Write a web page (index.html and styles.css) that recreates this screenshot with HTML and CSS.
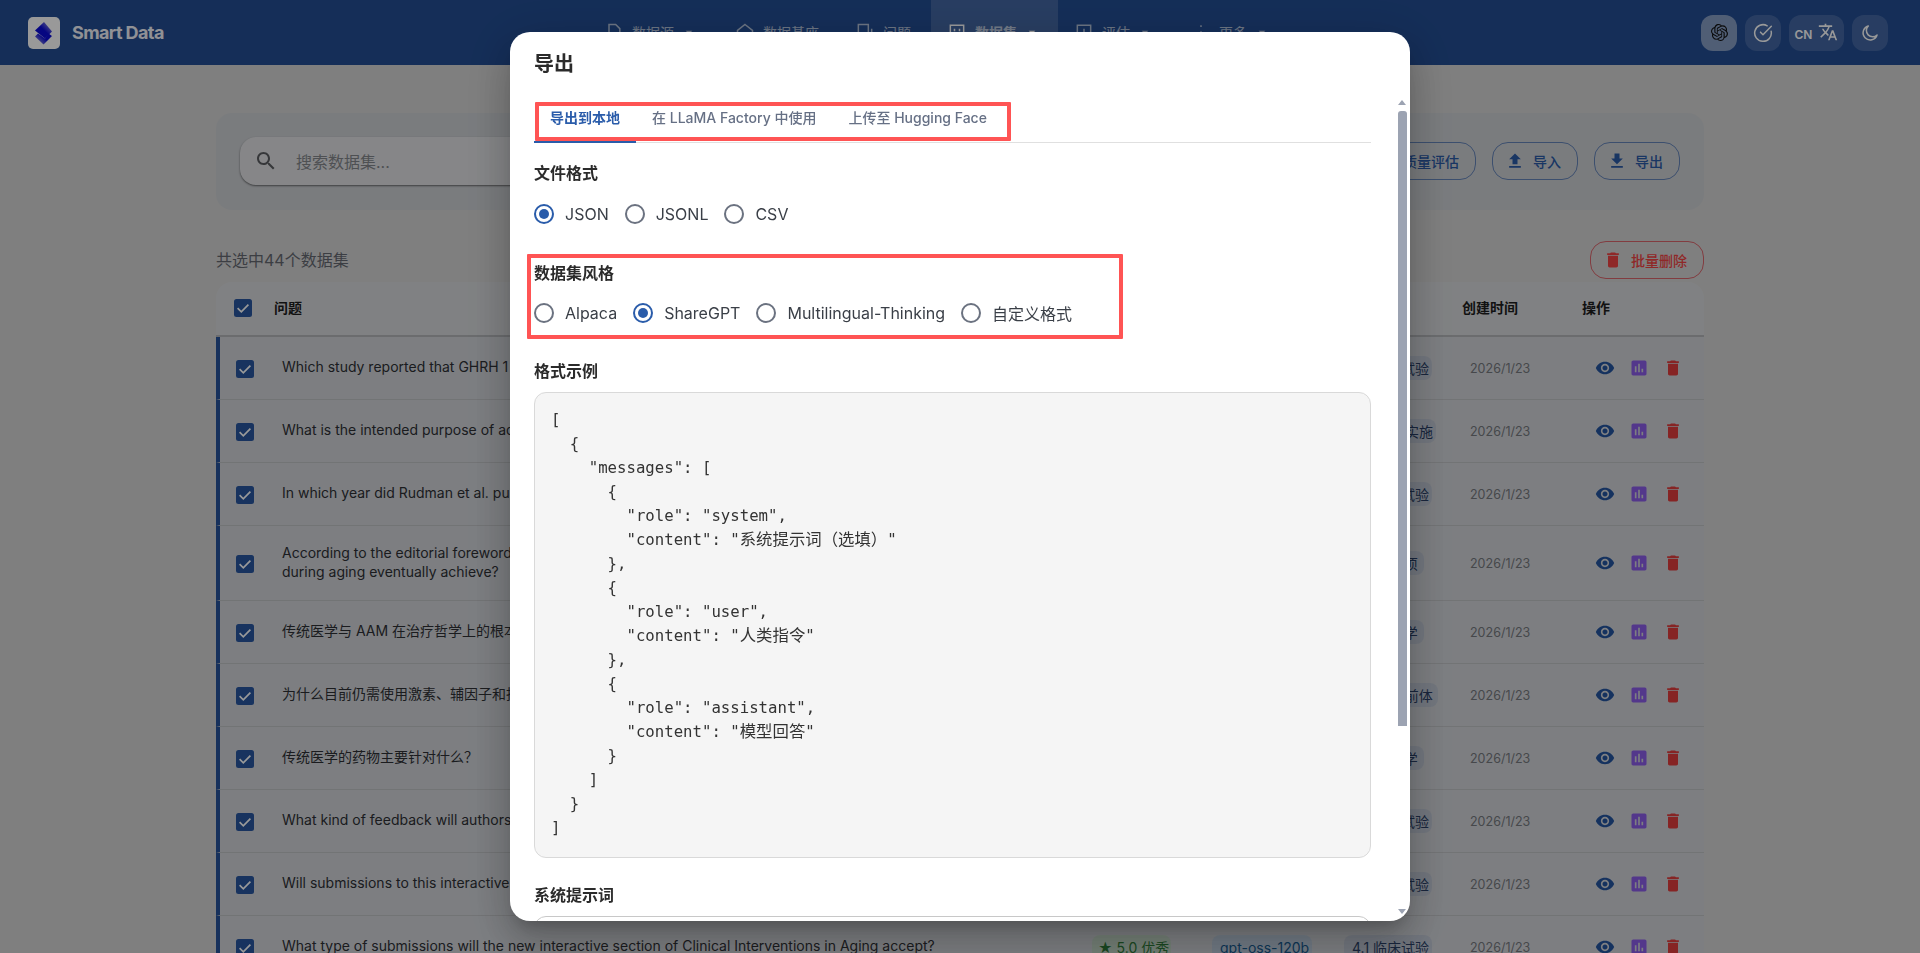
FILE: index.html
```html
<!DOCTYPE html>
<html lang="zh">
<head>
<meta charset="utf-8">
<title>Smart Data</title>
<link rel="stylesheet" href="styles.css">
</head>
<body>
<svg class="sprite" width="0" height="0" aria-hidden="true">
  <symbol id="i-eye" viewBox="0 0 24 24"><path d="M12 4.5C7 4.5 2.73 7.61 1 12c1.73 4.39 6 7.5 11 7.5s9.27-3.11 11-7.5c-1.73-4.39-6-7.5-11-7.5zM12 17c-2.76 0-5-2.24-5-5s2.24-5 5-5 5 2.24 5 5-2.24 5-5 5zm0-8c-1.66 0-3 1.34-3 3s1.34 3 3 3 3-1.34 3-3-1.34-3-3-3z"/></symbol>
  <symbol id="i-chart" viewBox="0 0 24 24"><path d="M19 3H5c-1.1 0-2 .9-2 2v14c0 1.1.9 2 2 2h14c1.1 0 2-.9 2-2V5c0-1.1-.9-2-2-2zM9 17H7v-7h2v7zm4 0h-2V7h2v10zm4 0h-2v-4h2v4z"/></symbol>
  <symbol id="i-del" viewBox="0 0 24 24"><path d="M6 19c0 1.1.9 2 2 2h8c1.1 0 2-.9 2-2V7H6v12zM19 4h-3.5l-1-1h-5l-1 1H5v2h14V4z"/></symbol>
  <symbol id="i-check" viewBox="0 0 18 18"><rect width="18" height="18" rx="2.5" fill="currentColor"/><path d="M3.6 9.2 7.3 12.8 14.4 5.6" fill="none" stroke="#fff" stroke-width="1.7"/></symbol>
  <symbol id="i-caret" viewBox="0 0 24 24"><path d="M7 10l5 5 5-5z"/></symbol>
</svg>

<div class="page">
  <header class="appbar">
    <div class="brand">
      <span class="logo">
        <svg viewBox="0 0 32 32" width="32" height="32">
          <defs>
            <linearGradient id="lg1" x1="0.2" y1="0.8" x2="0.9" y2="0.1"><stop offset="0.45" stop-color="#0a0ad8"/><stop offset="1" stop-color="#8f8fe0"/></linearGradient>
            <linearGradient id="lg2" x1="0.9" y1="0.2" x2="0.1" y2="0.8"><stop offset="0.4" stop-color="#0a0ad8"/><stop offset="1" stop-color="#8f8fe0"/></linearGradient>
          </defs>
          <path d="M16 5 7 13.500 17 21.500 24 14.500z" fill="url(#lg1)"/>
          <path d="M17 21.500 10 16.500 7 19.500 15.500 27.500 24 19 20.500 16.500z" fill="url(#lg2)"/>
        </svg>
      </span>
      <span class="brand-name">Smart Data</span>
    </div>
    <nav class="nav">
      <a class="nav-item nav-more"><svg viewBox="0 0 24 24"><path d="M6 3h8l5 5v13H6z" class="ol"/></svg><span>数据源</span><svg class="caret"><use href="#i-caret"/></svg></a>
      <a class="nav-item"><svg viewBox="0 0 24 24"><path d="M12 3 21 10v11H3V10z" class="ol"/></svg><span>数据基座</span></a>
      <a class="nav-item"><svg viewBox="0 0 24 24"><path d="M4 3h12v12H4zM20 8v13" class="ol"/></svg><span>问题</span></a>
      <a class="nav-item nav-more is-active"><svg viewBox="0 0 24 24"><path d="M4 4h16v16H4zM9 8v3M15 8v3" class="ol"/></svg><span>数据集</span><svg class="caret"><use href="#i-caret"/></svg></a>
      <a class="nav-item nav-more nav-tight"><svg viewBox="0 0 24 24"><path d="M4 4h16v16H4zM12 8v8" class="ol"/></svg><span>评估</span><svg class="caret"><use href="#i-caret"/></svg></a>
      <a class="nav-item nav-more"><svg viewBox="0 0 24 24"><path d="M12 4v2M12 11v2M12 18v2" class="ol"/></svg><span>更多</span><svg class="caret"><use href="#i-caret"/></svg></a>
    </nav>
    <div class="tools">
      <button class="tool tool-on">
        <svg viewBox="0 0 24 24" width="17" height="17"><path fill="#111" d="M22.2819 9.8211a5.9847 5.9847 0 0 0-.5157-4.9108 6.0462 6.0462 0 0 0-6.5098-2.9A6.0651 6.0651 0 0 0 4.9807 4.1818a5.9847 5.9847 0 0 0-3.9977 2.9 6.0462 6.0462 0 0 0 .7427 7.0966 5.98 5.98 0 0 0 .511 4.9107 6.051 6.051 0 0 0 6.5146 2.9001A5.9847 5.9847 0 0 0 13.2599 24a6.0557 6.0557 0 0 0 5.7718-4.2058 5.9894 5.9894 0 0 0 3.9977-2.9001 6.0557 6.0557 0 0 0-.7475-7.0729zm-9.022 12.6081a4.4755 4.4755 0 0 1-2.8764-1.0408l.1419-.0804 4.7783-2.7582a.7948.7948 0 0 0 .3927-.6813v-6.7369l2.02 1.1686a.071.071 0 0 1 .038.052v5.5826a4.504 4.504 0 0 1-4.4945 4.4944zm-9.6607-4.1254a4.4708 4.4708 0 0 1-.5346-3.0137l.142.0852 4.783 2.7582a.7712.7712 0 0 0 .7806 0l5.8428-3.3685v2.3324a.0804.0804 0 0 1-.0332.0615L9.74 19.9502a4.4992 4.4992 0 0 1-6.1408-1.6464zM2.3408 7.8956a4.485 4.485 0 0 1 2.3655-1.9728V11.6a.7664.7664 0 0 0 .3879.6765l5.8144 3.3543-2.0201 1.1685a.0757.0757 0 0 1-.071 0l-4.8303-2.7865A4.504 4.504 0 0 1 2.3408 7.872zm16.5963 3.8558L13.1038 8.364 15.1192 7.2a.0757.0757 0 0 1 .071 0l4.8303 2.7913a4.4944 4.4944 0 0 1-.6765 8.1042v-5.6772a.79.79 0 0 0-.407-.667zm2.0107-3.0231l-.142-.0852-4.7735-2.7818a.7759.7759 0 0 0-.7854 0L9.409 9.2297V6.8974a.0662.0662 0 0 1 .0284-.0615l4.8303-2.7866a4.4992 4.4992 0 0 1 6.6802 4.66zM8.3065 12.863l-2.02-1.1638a.0804.0804 0 0 1-.038-.0567V6.0742a4.4992 4.4992 0 0 1 7.3757-3.4537l-.142.0805L8.704 5.459a.7948.7948 0 0 0-.3927.6813zm1.0976-2.3654l2.602-1.4998 2.6069 1.4998v2.9994l-2.5974 1.4997-2.6067-1.4997Z"/></svg>
      </button>
      <button class="tool">
        <svg viewBox="0 0 24 24" width="20" height="20" fill="none" stroke="currentColor" stroke-width="1.800" stroke-linecap="round" stroke-linejoin="round"><path d="M21.800 10A10 10 0 1 1 17 3.340"/><path d="m9 11 3 3L22 4"/></svg>
      </button>
      <button class="tool tool-lang">
        <span class="lang-code">CN</span>
        <svg viewBox="0 0 24 24" width="20" height="20"><path fill="currentColor" d="M12.87 15.07l-2.54-2.51.03-.03c1.74-1.94 2.98-4.17 3.71-6.53H17V4h-7V2H8v2H1v1.99h11.17C11.5 7.92 10.44 9.75 9 11.35 8.07 10.32 7.3 9.19 6.69 8h-2c.73 1.63 1.73 3.17 2.98 4.56l-5.09 5.02L4 19l5-5 3.11 3.11.76-2.04zM18.5 10h-2L12 22h2l1.12-3h4.75L21 22h2l-4.5-12zm-2.62 7l1.62-4.33L19.12 17h-3.24z"/></svg>
      </button>
      <button class="tool">
        <svg viewBox="0 0 24 24" width="20" height="20" fill="none" stroke="currentColor" stroke-width="1.800" stroke-linecap="round" stroke-linejoin="round"><path d="M20.500 14.500A8.600 8.600 0 1 1 10 3.500a7 7 0 0 0 10.500 11z"/></svg>
      </button>
    </div>
  </header>

  <main class="main">
    <section class="toolbar">
      <div class="search">
        <svg class="search-icon" viewBox="0 0 24 24" width="24" height="24"><path d="M15.500 14h-.79l-.28-.27C15.410 12.590 16 11.110 16 9.500 16 5.910 13.090 3 9.500 3S3 5.910 3 9.500 5.910 16 9.500 16c1.610 0 3.090-.59 4.230-1.570l.27.28v.79l5 4.990L20.490 19l-4.990-5zm-6 0C7.010 14 5 11.990 5 9.500S7.010 5 9.500 5 14 7.010 14 9.500 11.990 14 9.500 14z"/></svg>
        <span class="placeholder">搜索数据集...</span>
      </div>
      <div class="actions">
        <button class="btn">质量评估</button>
        <button class="btn"><svg viewBox="0 0 24 24"><path d="M9 16h6v-6h4l-7-7-7 7h4v6zm-4 2h14v2H5z"/></svg>导入</button>
        <button class="btn"><svg viewBox="0 0 24 24"><path d="M19 9h-4V3H9v6H5l7 7 7-7zM5 18v2h14v-2H5z"/></svg>导出</button>
      </div>
    </section>

    <div class="selection">
      <span class="count">共选中44个数据集</span>
      <button class="btn btn-danger"><svg><use href="#i-del"/></svg>批量删除</button>
    </div>

    <section class="table">
      <div class="thead">
        <svg class="cb"><use href="#i-check"/></svg>
        <span>问题</span>
        <span>创建时间</span>
        <span>操作</span>
      </div>

      <div class="row">
        <svg class="cb"><use href="#i-check"/></svg>
        <div class="q">Which study reported that GHRH 1</div>
        <span class="chip chip-g">★ 5.0 优秀</span><span class="chip chip-b">gpt-oss-120b</span><span class="chip chip-n">4.1 临床试验</span>
        <span class="date">2026/1/23</span>
        <div class="ops"><svg class="op-view"><use href="#i-eye"/></svg><svg class="op-eval"><use href="#i-chart"/></svg><svg class="op-del"><use href="#i-del"/></svg></div>
      </div>
      <div class="row">
        <svg class="cb"><use href="#i-check"/></svg>
        <div class="q">What is the intended purpose of ad</div>
        <span class="chip chip-g">★ 5.0 优秀</span><span class="chip chip-b">gpt-oss-120b</span><span class="chip chip-n chip-w92">4.2 临床实施</span>
        <span class="date">2026/1/23</span>
        <div class="ops"><svg class="op-view"><use href="#i-eye"/></svg><svg class="op-eval"><use href="#i-chart"/></svg><svg class="op-del"><use href="#i-del"/></svg></div>
      </div>
      <div class="row">
        <svg class="cb"><use href="#i-check"/></svg>
        <div class="q">In which year did Rudman et al. pu</div>
        <span class="chip chip-g">★ 5.0 优秀</span><span class="chip chip-b">gpt-oss-120b</span><span class="chip chip-n">4.1 临床试验</span>
        <span class="date">2026/1/23</span>
        <div class="ops"><svg class="op-view"><use href="#i-eye"/></svg><svg class="op-eval"><use href="#i-chart"/></svg><svg class="op-del"><use href="#i-del"/></svg></div>
      </div>
      <div class="row row-tall">
        <svg class="cb"><use href="#i-check"/></svg>
        <div class="q">According to the editorial foreword<br>during aging eventually achieve?</div>
        <span class="chip chip-g">★ 5.0 优秀</span><span class="chip chip-b">gpt-oss-120b</span><span class="chip chip-n chip-w80">1 选题事项</span>
        <span class="date">2026/1/23</span>
        <div class="ops"><svg class="op-view"><use href="#i-eye"/></svg><svg class="op-eval"><use href="#i-chart"/></svg><svg class="op-del"><use href="#i-del"/></svg></div>
      </div>
      <div class="row">
        <svg class="cb"><use href="#i-check"/></svg>
        <div class="q">传统医学与 AAM 在治疗哲学上的根本</div>
        <span class="chip chip-g">★ 5.0 优秀</span><span class="chip chip-b">gpt-oss-120b</span><span class="chip chip-n chip-w80">1 传统医学</span>
        <span class="date">2026/1/23</span>
        <div class="ops"><svg class="op-view"><use href="#i-eye"/></svg><svg class="op-eval"><use href="#i-chart"/></svg><svg class="op-del"><use href="#i-del"/></svg></div>
      </div>
      <div class="row">
        <svg class="cb"><use href="#i-check"/></svg>
        <div class="q">为什么目前仍需使用激素、辅因子和抗</div>
        <span class="chip chip-g">★ 5.0 优秀</span><span class="chip chip-b">gpt-oss-120b</span><span class="chip chip-n chip-w94">3.2 激素前体</span>
        <span class="date">2026/1/23</span>
        <div class="ops"><svg class="op-view"><use href="#i-eye"/></svg><svg class="op-eval"><use href="#i-chart"/></svg><svg class="op-del"><use href="#i-del"/></svg></div>
      </div>
      <div class="row">
        <svg class="cb"><use href="#i-check"/></svg>
        <div class="q">传统医学的药物主要针对什么？</div>
        <span class="chip chip-g">★ 5.0 优秀</span><span class="chip chip-b">gpt-oss-120b</span><span class="chip chip-n chip-w80">1 传统医学</span>
        <span class="date">2026/1/23</span>
        <div class="ops"><svg class="op-view"><use href="#i-eye"/></svg><svg class="op-eval"><use href="#i-chart"/></svg><svg class="op-del"><use href="#i-del"/></svg></div>
      </div>
      <div class="row">
        <svg class="cb"><use href="#i-check"/></svg>
        <div class="q">What kind of feedback will authors</div>
        <span class="chip chip-g">★ 5.0 优秀</span><span class="chip chip-b">gpt-oss-120b</span><span class="chip chip-n">4.1 临床试验</span>
        <span class="date">2026/1/23</span>
        <div class="ops"><svg class="op-view"><use href="#i-eye"/></svg><svg class="op-eval"><use href="#i-chart"/></svg><svg class="op-del"><use href="#i-del"/></svg></div>
      </div>
      <div class="row">
        <svg class="cb"><use href="#i-check"/></svg>
        <div class="q">Will submissions to this interactive</div>
        <span class="chip chip-g">★ 5.0 优秀</span><span class="chip chip-b">gpt-oss-120b</span><span class="chip chip-n">4.1 临床试验</span>
        <span class="date">2026/1/23</span>
        <div class="ops"><svg class="op-view"><use href="#i-eye"/></svg><svg class="op-eval"><use href="#i-chart"/></svg><svg class="op-del"><use href="#i-del"/></svg></div>
      </div>
      <div class="row">
        <svg class="cb"><use href="#i-check"/></svg>
        <div class="q">What type of submissions will the new interactive section of Clinical Interventions in Aging accept?</div>
        <span class="chip chip-g">★ 5.0 优秀</span><span class="chip chip-b">gpt-oss-120b</span><span class="chip chip-n">4.1 临床试验</span>
        <span class="date">2026/1/23</span>
        <div class="ops"><svg class="op-view"><use href="#i-eye"/></svg><svg class="op-eval"><use href="#i-chart"/></svg><svg class="op-del"><use href="#i-del"/></svg></div>
      </div>
    </section>
  </main>
</div>

<div class="backdrop">
  <div class="dialog">
    <h2 class="dialog-title">导出</h2>
    <div class="dialog-body">
      <div class="tabs">
        <span class="tab tab-on">导出到本地</span>
        <span class="tab">在 LLaMA Factory 中使用</span>
        <span class="tab">上传至 Hugging Face</span>
      </div>

      <h3 class="label label-first">文件格式</h3>
      <div class="radios">
        <label class="radio"><i class="dot dot-on"></i>JSON</label>
        <label class="radio"><i class="dot"></i>JSONL</label>
        <label class="radio"><i class="dot"></i>CSV</label>
      </div>

      <h3 class="label label-style">数据集风格</h3>
      <div class="radios radios-style">
        <label class="radio"><i class="dot"></i>Alpaca</label>
        <label class="radio"><i class="dot dot-on"></i>ShareGPT</label>
        <label class="radio"><i class="dot"></i>Multilingual-Thinking</label>
        <label class="radio"><i class="dot"></i>自定义格式</label>
      </div>

      <h3 class="label">格式示例</h3>
      <div class="code">
        <div class="line">[</div>
        <div class="line">  {</div>
        <div class="line">    "messages": [</div>
        <div class="line">      {</div>
        <div class="line">        "role": "system",</div>
        <div class="line">        "content": "<span class="cjk">系统提示词（选填）</span>"</div>
        <div class="line">      },</div>
        <div class="line">      {</div>
        <div class="line">        "role": "user",</div>
        <div class="line">        "content": "<span class="cjk">人类指令</span>"</div>
        <div class="line">      },</div>
        <div class="line">      {</div>
        <div class="line">        "role": "assistant",</div>
        <div class="line">        "content": "<span class="cjk">模型回答</span>"</div>
        <div class="line">      }</div>
        <div class="line">    ]</div>
        <div class="line">  }</div>
        <div class="line">]</div>
      </div>

      <h3 class="label">系统提示词</h3>
      <div class="textarea"></div>
    </div>

    <div class="scrollbar">
      <i class="arrow arrow-up"></i>
      <i class="thumb"></i>
      <i class="arrow arrow-down"></i>
    </div>
    <div class="mark mark-tabs"></div>
    <div class="mark mark-style"></div>
  </div>
</div>
</body>
</html>
```

FILE: styles.css
```css
* { box-sizing: border-box; }
html, body { margin: 0; height: 100%; overflow: hidden; }
body {
  background: #d4d4d4;
  color: #45474d;
  font-family: Inter, "Noto Sans CJK SC", "Noto Sans", sans-serif;
  font-size: 14px;
}
button { font: inherit; cursor: pointer; }
.sprite { position: absolute; }

.page { height: 953px; overflow: hidden; }

/* app bar */
.appbar {
  display: flex;
  align-items: center;
  height: 65px;
  padding: 0 32px 0 28px;
  background: #234d93;
  color: #fff;
}
.brand { display: flex; align-items: center; gap: 12px; width: 560px; }
.logo { display: block; width: 32px; height: 32px; border-radius: 5px; background: #fff; }
.logo svg { display: block; }
.brand-name { font-size: 18px; font-weight: 700; color: #f0f2f8; letter-spacing: -0.6px; }
.nav { display: flex; gap: 4px; height: 65px; }
.nav-item { display: flex; align-items: center; gap: 8px; padding: 0 16px 2px; color: #fff; font-size: 14px; opacity: .65; }
.nav-item svg { width: 20px; height: 20px; flex: none; }
.nav-item .ol { fill: none; stroke: currentColor; stroke-width: 1.800; }
.nav-item .caret { width: 16px; height: 16px; margin-left: -1px; fill: currentColor; }
.nav-more { padding-right: 18px; }
.nav-tight { margin-left: -4px; }
.is-active { background: rgba(255,255,255,.15); font-weight: 700; opacity: 1; }
.is-active span { opacity: .65; }
.tools { display: flex; gap: 8px; margin-left: auto; }
.tool {
  display: flex; align-items: center; justify-content: center; gap: 6px;
  width: 36px; height: 36px; padding: 0;
  border: 0; border-radius: 12px;
  background: rgba(255,255,255,.15); color: #fff;
}
.tool-on { background: rgba(255,255,255,.45); }
.tool-lang { width: 55px; }
.lang-code { font-size: 12px; font-weight: 600; padding-top: 3px; }
.tool-lang svg { margin-top: -2px; }

/* page body */
.main { width: 1488px; margin: 0 auto; padding-top: 48px; }
.toolbar {
  display: flex; align-items: center; justify-content: space-between;
  height: 97px; padding: 0 24px 1px;
  border-radius: 16px;
  background: #cccfd3;
}
.search {
  display: flex; align-items: center; gap: 18px;
  width: 600px; height: 48px; padding: 0 14px;
  border-radius: 16px;
  background: #dfe0e3;
  box-shadow: 0 1px 2px rgba(0,0,0,.5);
}
.search-icon { fill: #5b5d61; flex: none; }
.placeholder { font-size: 16px; color: #83868b; }
.actions { display: flex; gap: 16px; }
.btn {
  display: inline-flex; align-items: center;
  height: 38px; padding: 0 16px;
  border: 1px solid #6484b8; border-radius: 16px;
  background: transparent; color: #2b5aa6;
  font-size: 14px; font-weight: 500; white-space: nowrap;
}
.btn svg { width: 20px; height: 20px; margin: 0 8px 0 -4px; fill: currentColor; }
.btn-danger { border-color: #d9646b; color: #ef4444; }

.selection { display: flex; align-items: center; justify-content: space-between; margin-top: 31px; }
.count { font-size: 16px; color: #646870; margin-top: -2px; }

.table { margin-top: 3px; border-radius: 16px 16px 0 0; background: #d6d8db; }
.thead {
  display: grid; grid-template-columns: 58px 1188px 120px 1fr; align-items: center;
  height: 55px; padding-bottom: 1px;
  border-bottom: 2px solid #b2b4b8;
  font-weight: 700; color: #1d1d1d;
}
.thead .cb { margin-left: 18px; }
.thead span { margin-top: -2px; }
.cb { width: 18px; height: 18px; color: #28569f; display: block; }
.row {
  display: flex; align-items: center;
  height: 63px; padding-left: 16px;
  border-left: 4px solid #27539a;
  border-bottom: 1px solid #bfc1c4;
  background: #d0d3d8;
}
.row-tall { height: 75px; }
.row .cb { flex: none; margin-top: 1px; }
.q { flex: none; width: 810px; margin-left: 28px; margin-top: -3px; line-height: 19px; color: #2e3034; white-space: nowrap; }
.chip {
  display: inline-flex; align-items: center; flex: none;
  height: 24px; padding: 0 8px; border-radius: 8px;
  font-size: 14px; white-space: nowrap;
}
.chip-g { width: 79px; margin-right: 41px; padding: 0 6px; background: #c2d6c6; color: #2e7a38; }
.chip-b { width: 100px; margin-right: 32px; background: #bccbdc; color: #165a90; }
.chip-n { width: 88px; margin-right: 38px; background: #bfc6d3; color: #2a3f66; }
.chip-w80 { width: 80px; margin-right: 46px; }
.chip-w92 { width: 92px; margin-right: 34px; }
.chip-w94 { width: 94px; margin-right: 32px; }
.date { flex: none; width: 118px; font-size: 12.500px; color: #75787d; }
.ops { display: flex; flex: none; }
.ops svg { width: 20px; height: 20px; margin: 0 7px; }
.op-view { fill: #24549f; }
.op-eval { fill: #8a5ce8; }
.op-del { fill: #e03c3c; }

/* modal */
.backdrop {
  position: fixed; inset: 0;
  display: flex; align-items: center; justify-content: center;
  background: rgba(0,0,0,.4);
  backdrop-filter: blur(.7px);
}
.dialog {
  position: relative;
  display: flex; flex-direction: column;
  width: 900px; height: calc(100% - 64px);
  border-radius: 20px;
  background: #fff;
  color: #333;
  overflow: hidden;
  box-shadow: 0 11px 15px -7px rgba(0,0,0,.2), 0 24px 38px 3px rgba(0,0,0,.14), 0 9px 46px 8px rgba(0,0,0,.12);
}
.dialog-title { margin: 0; padding: 16px 24px 14px; font-size: 20px; font-weight: 600; line-height: 32px; color: #2b2b2b; }
.dialog-body { flex: 1; min-height: 0; overflow: hidden; padding: 0 39px 0 24px; }
.tabs { display: flex; height: 49px; border-bottom: 1px solid #e0e0e0; }
.tab { display: flex; align-items: center; height: 48px; padding: 0 16px 2px; font-weight: 500; color: #667085; white-space: nowrap; }
.tab-on { height: 49px; padding-bottom: 2px; border-bottom: 2px solid #2a5caa; color: #2a5caa; font-weight: 700; }
.label { margin: 25px 0 0; font-size: 16px; font-weight: 600; line-height: 24px; color: #2b2b2b; }
.label-first { margin-top: 18px; }
.label-style { margin-top: 26px; }
.radios { display: flex; gap: 16px; margin-top: 8px; height: 42px; align-items: center; }
.radios-style { margin-top: 7px; }
.radio { display: flex; align-items: center; gap: 11px; font-size: 16px; color: #3a3f47; }
.dot { display: flex; align-items: center; justify-content: center; width: 20px; height: 20px; border: 2px solid #6b7280; border-radius: 50%; }
.dot-on { border-color: #2a5caa; }
.dot-on::after { content: ""; width: 10px; height: 10px; border-radius: 50%; background: #2a5caa; }
.code {
  margin: 9px 0 0; padding: 15px 16px 17px;
  border: 1px solid #d9d9d9; border-radius: 12px;
  background: #f5f5f5; color: #333;
  font: 15.680px/24px "DejaVu Sans Mono", "Noto Sans CJK SC", monospace;
}
.line { height: 24px; white-space: pre; }
.cjk { font-size: 16.400px; line-height: 1; }
.textarea { height: 120px; margin-top: 9px; border: 1px solid #c8c8c8; border-radius: 12px; }

/* scrollbar + annotation boxes drawn over the dialog */
.scrollbar { position: absolute; top: 68px; right: 3px; bottom: 7px; width: 9px; display: flex; flex-direction: column; }
.thumb { display: block; height: 615px; margin-top: 6px; border-radius: 3px 3px 0 0; background: #9ca3b2; }
.arrow { display: block; width: 0; height: 0; border-left: 4.500px solid transparent; border-right: 4.500px solid transparent; }
.arrow-up { border-bottom: 5px solid #9ca3b2; }
.arrow-down { margin-top: auto; border-top: 5px solid #9ca3b2; }
.mark { position: absolute; border: 4px solid #ff5454; border-radius: 1px; pointer-events: none; }
.mark-tabs { left: 25px; top: 70px; width: 476px; height: 39px; }
.mark-style { left: 17px; top: 222px; width: 596px; height: 85px; }
```
